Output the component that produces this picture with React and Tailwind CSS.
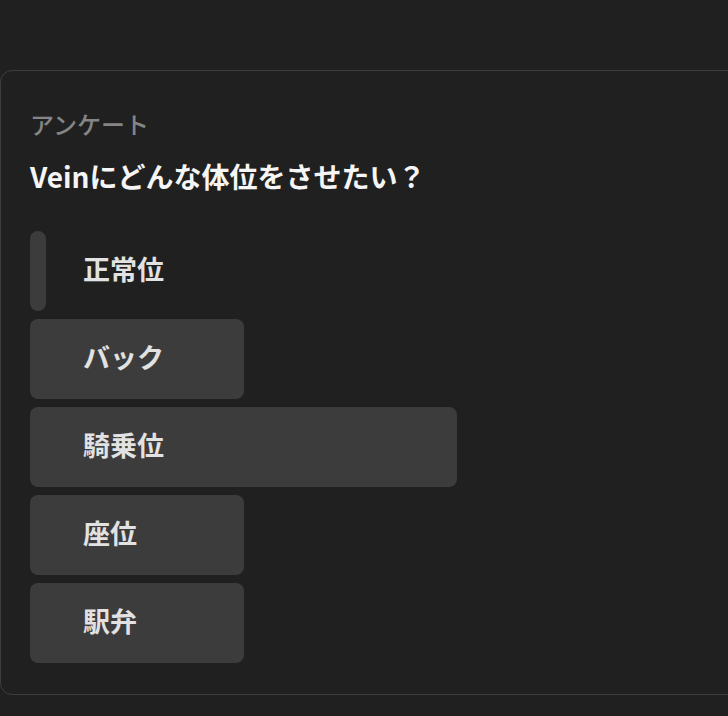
import React from "react";

const options = [
  { label: "正常位", width: 16 },
  { label: "バック", width: 214 },
  { label: "騎乗位", width: 427 },
  { label: "座位", width: 214 },
  { label: "駅弁", width: 214 },
];

export default function App() {
  return (
    <div
      className="w-[728px] h-[716px] overflow-hidden bg-[#202020] pt-[70px]"
      style={{ fontFamily: '"Noto Sans CJK JP", "Noto Sans", sans-serif' }}
    >
      <div className="w-[800px] rounded-tl-xl rounded-bl-xl border border-[#3d3d3d] px-[29px] pt-[32px] pb-[31px]">
        <div className="text-[24px] leading-[42px] font-medium text-[#858585]">アンケート</div>
        <div className="mt-[11px] text-[28px] leading-[40px] font-bold text-[#f5f5f5]">
          Veinにどんな体位をさせたい？
        </div>
        <div className="mt-[35px] flex flex-col gap-2">
          {options.map((o) => (
            <div key={o.label} className="relative h-20 flex items-center">
              <div
                className="absolute inset-y-0 left-0 rounded-lg bg-[#3c3c3c]"
                style={{ width: o.width }}
              />
              <span className="relative pl-[53px] pb-[3px] text-[27px] font-semibold text-[#e2e2e2]">
                {o.label}
              </span>
            </div>
          ))}
        </div>
      </div>
    </div>
  );
}
